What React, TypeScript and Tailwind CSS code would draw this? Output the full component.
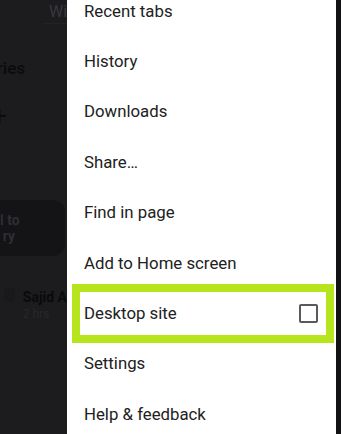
import React from 'react';

const items = [
  'Recent tabs',
  'History',
  'Downloads',
  'Share…',
  'Find in page',
  'Add to Home screen',
  'Desktop site',
  'Settings',
  'Help & feedback',
];

const App: React.FC = () => {
  return (
    <div
      className="flex h-[434px] w-[341px] overflow-hidden bg-[#1c1c1f]"
      style={{ fontFamily: 'Roboto, "Noto Sans", sans-serif' }}
    >
      {/* dimmed page behind the menu */}
      <div className="flex w-[67px] shrink-0 flex-col overflow-hidden">
        <div className="mt-[1px] flex h-[22px] items-center whitespace-nowrap pl-[49px] text-[16px] text-[#38383c]">
          Wi
        </div>
        <div className="ml-[42px] h-px w-[25px] bg-[#232326]" />
        <div className="mt-[33px] whitespace-nowrap text-[17px] font-bold leading-[22px] text-[#0c0c0e] -ml-[29px]">
          Stories
        </div>
        <div className="mt-[24px] whitespace-nowrap text-[26px] leading-[26px] text-[#0c0c0e] -ml-[8px]">
          +
        </div>
        <div className="mt-[71px] flex h-[56px] w-[65px] flex-col justify-center rounded-r-[12px] bg-[#141416] pr-[50px] text-right text-[14px] font-bold leading-[16px] text-[#2e2e33]">
          <span className="whitespace-nowrap">l to</span>
          <span className="whitespace-nowrap">ry</span>
        </div>
        <div className="mt-[33px] flex items-start gap-[8px] pl-[4px]">
          <div className="mt-[-2px] h-[15px] w-[15px] rounded-full bg-[#19191b]" />
          <div className="flex flex-col">
            <span className="whitespace-nowrap text-[14px] font-bold leading-[17px] text-[#0a0a0b]">
              Sajid A
            </span>
            <span className="whitespace-nowrap text-[12px] leading-[16px] text-[#27272a]">
              2 hrs
            </span>
          </div>
        </div>
      </div>

      {/* overflow menu */}
      <div className="flex w-[269px] shrink-0 flex-col bg-white">
        <div className="-mt-[14px] flex flex-col">
          {items.map((label) => (
            <div
              key={label}
              className="relative flex h-[50.4px] shrink-0 items-center justify-between pl-[17px] pr-[18px] text-[16.8px] text-[#212121]"
            >
              <span className="whitespace-nowrap">{label}</span>
              {label === 'Desktop site' && (
                <>
                  <div className="h-[19px] w-[19px] rounded-[2px] border-2 border-[#5a5a5a]" />
                  <div className="absolute -top-[4px] -bottom-[4px] left-[5px] right-[2px] border-[8px] border-[#b6e51d]" />
                </>
              )}
            </div>
          ))}
        </div>
      </div>

      <div className="w-[5px] shrink-0 bg-[#121214]" />
    </div>
  );
};

export default App;
